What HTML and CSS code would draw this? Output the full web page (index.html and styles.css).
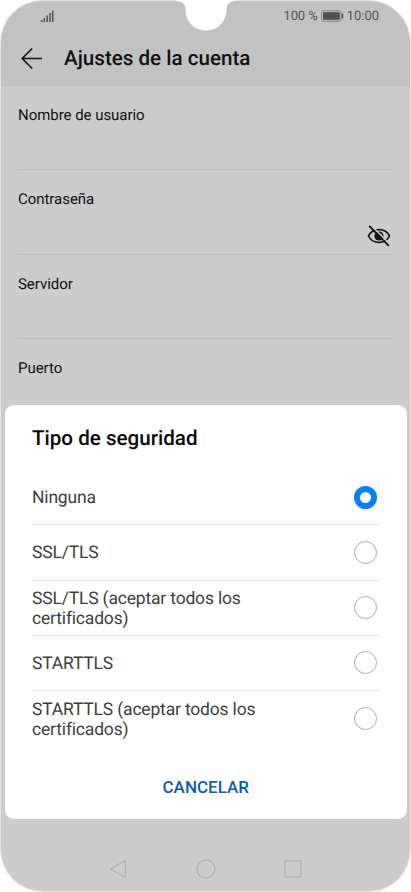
FILE: index.html
```html
<!DOCTYPE html>
<html lang="es">
<head>
<meta charset="utf-8">
<title>Ajustes de la cuenta</title>
<link rel="stylesheet" href="styles.css">
</head>
<body>
<div class="phone">
  <header class="top">
    <div class="status">
      <svg class="signal" width="14" height="12" viewBox="0 0 14 12"><path d="M1.600 10v2M4.300 8v4M7.200 5.500v6.500M10 3v9M12.700 .5v11.500" stroke="#505050" stroke-width="1.500" fill="none"/></svg>
      <div class="status-right">
        <span class="percent">100 %</span>
        <svg class="battery" width="23" height="12" viewBox="0 0 23 12"><rect x=".6" y=".8" width="19.400" height="10.400" rx="1.500" fill="none" stroke="#858585"/><rect x="2" y="2.200" width="16.700" height="7.600" fill="#505050"/><path d="M21.500 3.500v5" stroke="#505050" stroke-width="1.500"/></svg>
        <span class="clock">10:00</span>
      </div>
    </div>
    <div class="appbar">
      <svg class="back" width="22" height="22" viewBox="0 0 22 22"><path d="M11.200 .5L1.200 10.500l10 10M1.200 10.500H21" fill="none" stroke="#151515" stroke-width="1.600"/></svg>
      <h1>Ajustes de la cuenta</h1>
    </div>
  </header>
  <main class="form">
    <div class="field"><label>Nombre de usuario</label></div>
    <div class="field"><label>Contraseña</label>
      <svg class="eye" width="24" height="22" viewBox="0 0 24 22"><path d="M1.500 11C3.500 6.700 7.300 4.600 12 4.600s8.500 2.100 10.500 6.400c-2 4.300-5.800 6.400-10.500 6.400S3.500 15.300 1.500 11z" fill="none" stroke="#161616" stroke-width="1.700"/><circle cx="12" cy="11" r="4.600" fill="#161616"/><path d="M12.500 8.700q1.800.2 2.200 2" fill="none" stroke="#ccc" stroke-width="1"/><path d="M4 .2L23.500 19.700" stroke="#ccc" stroke-width="1.500"/><path d="M2.200 1L21.800 20.800" stroke="#161616" stroke-width="1.800"/></svg>
    </div>
    <div class="field"><label>Servidor</label></div>
    <div class="field"><label>Puerto</label></div>
  </main>
  <nav class="navbar">
    <svg width="200" height="24" viewBox="0 0 200 24" fill="none" stroke="#b3b3b3" stroke-width="1.300" stroke-linejoin="round"><path d="M20.500 3.500v17L5.500 12z"/><circle cx="101" cy="12" r="9"/><rect x="180" y="4" width="16" height="16" rx=".5"/></svg>
  </nav>
  <section class="dialog">
    <h2>Tipo de seguridad</h2>
    <ul>
      <li><span>Ninguna</span><i class="radio checked"></i></li>
      <li><span>SSL/TLS</span><i class="radio"></i></li>
      <li><span>SSL/TLS (aceptar todos los certificados)</span><i class="radio"></i></li>
      <li><span>STARTTLS</span><i class="radio"></i></li>
      <li><span>STARTTLS (aceptar todos los certificados)</span><i class="radio"></i></li>
    </ul>
    <button>CANCELAR</button>
  </section>
  <svg class="notch" width="60" height="31" viewBox="0 0 60 31"><path d="M0 0v1C6 1 9.500 4 9.500 9.500C9.500 21 18 30.500 30 30.500S50.500 21 50.500 9.500C50.500 4 54 1 60 1V0z" fill="#fff"/></svg>
</div>
</body>
</html>
```
FILE: styles.css
```css
* { box-sizing: border-box; }
body {
  margin: 0;
  width: 411px;
  height: 892px;
  padding: 1px;
  background: #fff;
  font-family: Roboto, sans-serif;
  text-rendering: geometricPrecision;
  overflow: hidden;
}
.phone {
  position: relative;
  display: flex;
  flex-direction: column;
  width: 409px;
  height: 890px;
  border-radius: 41px / 42px;
  background: #ccc;
  box-shadow: 0 0 0 1px #e5e5e5;
}
.top {
  height: 85px;
  border-radius: 41px 41px 0 0 / 42px 42px 0 0;
  background: #c2c2c2;
}
.status {
  display: flex;
  justify-content: space-between;
  align-items: center;
  height: 29px;
  padding: 0 31px 0 39px;
}
.status-right {
  display: flex;
  align-items: center;
  font-size: 13px;
  line-height: 16px;
  color: #555;
}
.percent, .clock { padding-top: 2px; }
.percent { letter-spacing: -.1px; }
.battery { margin: 0 3px 0 3px; }
.appbar {
  display: flex;
  align-items: center;
  height: 57px;
  padding-left: 20px;
}
h1, h2 { margin: 0; font-size: 20.600px; font-weight: 500; }
h1 { margin-left: 21px; color: #121212; line-height: 24px; }
.form { flex: 1; padding: 0 18px 0 17px; }
.field {
  display: flex;
  justify-content: space-between;
  height: 84.3px;
  padding-top: 19px;
  border-bottom: 1px solid #bfbfbf;
  font-size: 15px;
  letter-spacing: -.04px;
  line-height: 20px;
  color: #111;
}
.field:last-child { border: 0; }
.eye { margin: 36px 1px 0 0; }
.navbar { display: flex; justify-content: center; height: 34px; padding-right: 2px; }
.dialog {
  position: absolute;
  left: 4px;
  top: 404px;
  width: 401.500px;
  height: 414px;
  padding: 22px 27px 0;
  border-radius: 9px;
  background: #fff;
}
h2 { color: #080808; line-height: 24px; }
ul { list-style: none; margin: 19px 0 0; padding: 0; }
li {
  display: flex;
  justify-content: space-between;
  align-items: center;
  height: 55.250px;
  border-bottom: 1px solid #e8e8e8;
  font-size: 17.500px;
  letter-spacing: -.18px;
  line-height: 20px;
  color: #3d3d3d;
}
li:last-child { border: 0; }
li span { width: 245px; padding-top: 2px; }
.radio {
  width: 23px;
  height: 23px;
  margin-right: 3px;
  border: 1px solid #aaa;
  border-radius: 50%;
}
.checked { border: 6px solid #087fff; }
button {
  display: block;
  margin: 29px auto 0;
  padding: 0;
  border: 0;
  background: none;
  color: #0b5cad;
  font: 500 17px/24px Roboto, sans-serif;
}
.notch { position: absolute; left: 175px; top: -1px; }
```
